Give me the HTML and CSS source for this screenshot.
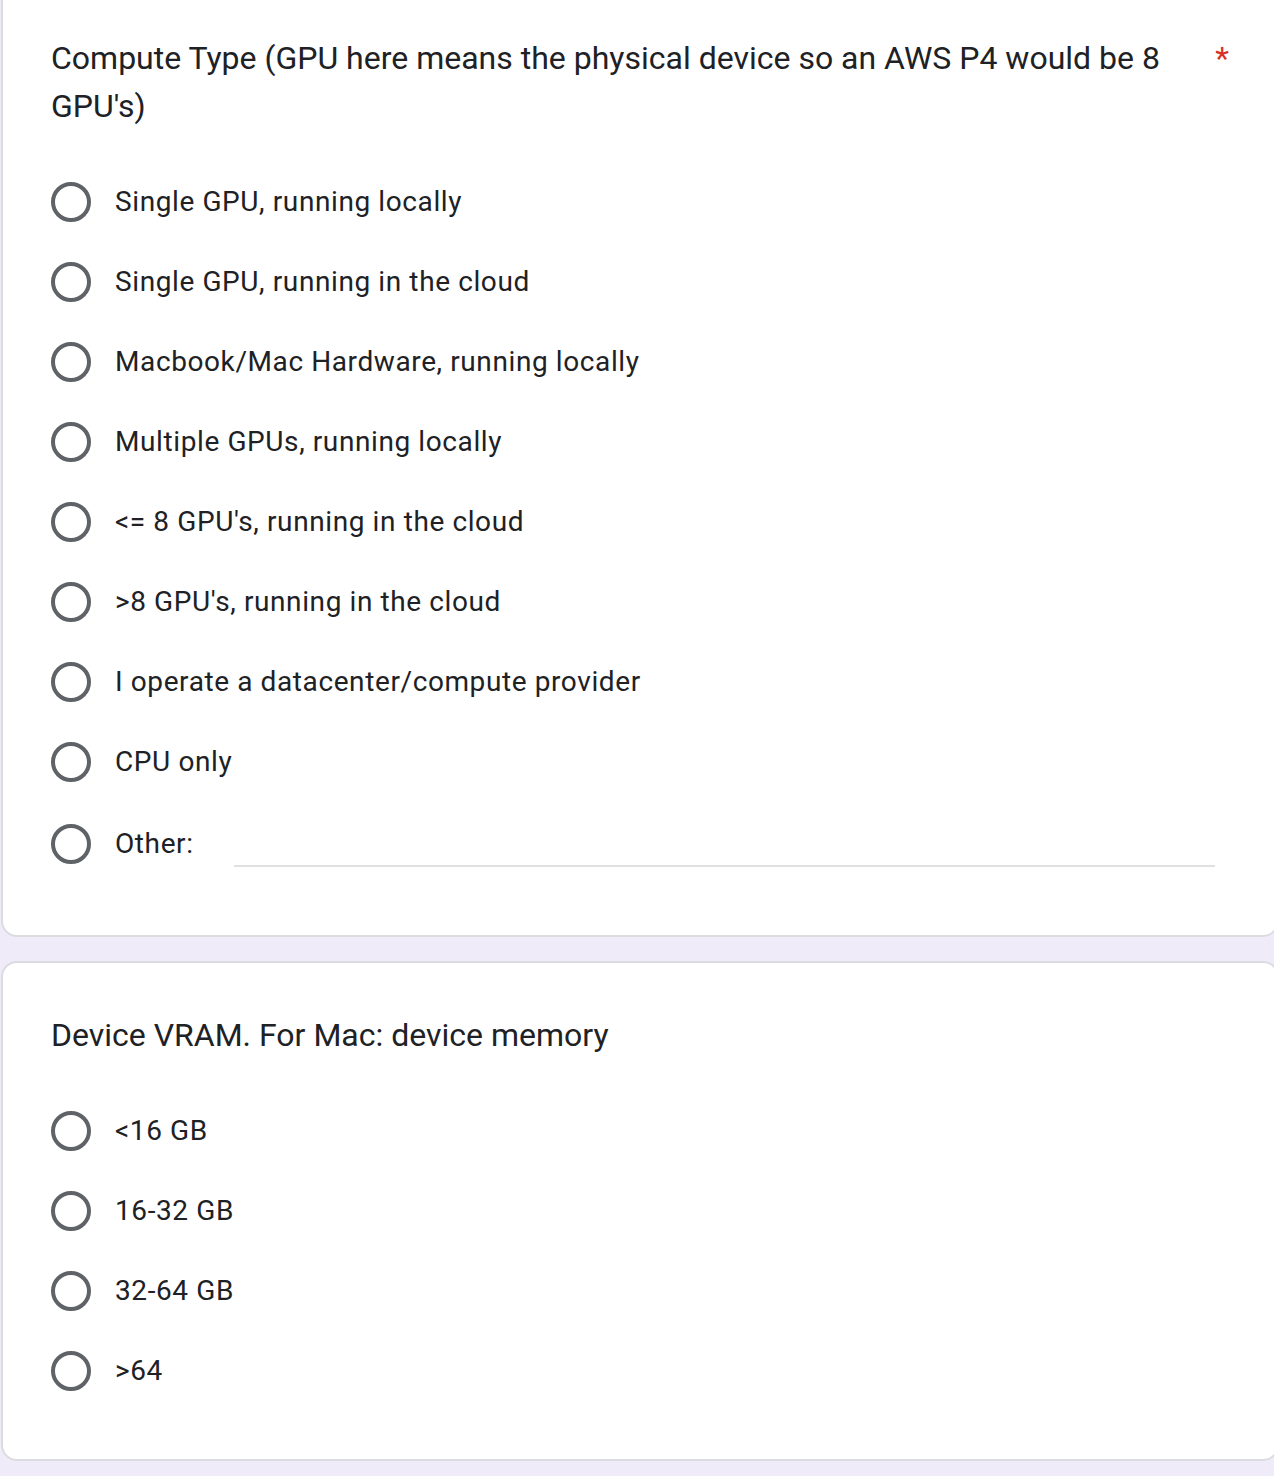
FILE: index.html
```html
<!DOCTYPE html>
<html lang="en">
<head>
<meta charset="utf-8">
<title>Form</title>
<link rel="stylesheet" href="styles.css">
</head>
<body>
<main class="page">
  <section class="card card-first">
    <div class="q-header">
      <div class="q-title">Compute Type (GPU here means the physical device so an AWS P4 would be 8 GPU's)</div>
      <span class="required">*</span>
    </div>
    <div class="options">
      <label class="option"><span class="radio"></span><span class="opt-text">Single GPU, running locally</span></label>
      <label class="option"><span class="radio"></span><span class="opt-text">Single GPU, running in the cloud</span></label>
      <label class="option"><span class="radio"></span><span class="opt-text">Macbook/Mac Hardware, running locally</span></label>
      <label class="option"><span class="radio"></span><span class="opt-text">Multiple GPUs, running locally</span></label>
      <label class="option"><span class="radio"></span><span class="opt-text">&lt;= 8 GPU's, running in the cloud</span></label>
      <label class="option"><span class="radio"></span><span class="opt-text">&gt;8 GPU's, running in the cloud</span></label>
      <label class="option"><span class="radio"></span><span class="opt-text">I operate a datacenter/compute provider</span></label>
      <label class="option"><span class="radio"></span><span class="opt-text">CPU only</span></label>
      <div class="option option-other"><span class="radio"></span><span class="opt-text">Other:</span><span class="other-input"></span></div>
    </div>
  </section>
  <section class="card">
    <div class="q-header">
      <div class="q-title">Device VRAM. For Mac: device memory</div>
    </div>
    <div class="options">
      <label class="option"><span class="radio"></span><span class="opt-text">&lt;16 GB</span></label>
      <label class="option"><span class="radio"></span><span class="opt-text">16-32 GB</span></label>
      <label class="option"><span class="radio"></span><span class="opt-text">32-64 GB</span></label>
      <label class="option"><span class="radio"></span><span class="opt-text">&gt;64</span></label>
    </div>
  </section>
</main>
</body>
</html>
```
FILE: styles.css
```css
html, body {
  margin: 0;
  padding: 0;
}
body {
  background: #f0ebf8;
  font-family: Roboto, "Noto Sans", Arial, sans-serif;
  color: #202124;
  overflow: hidden;
  width: 1274px;
  height: 1476px;
}
.page {
  padding-left: 1px;
  display: flex;
  flex-direction: column;
  gap: 24px;
}
.card {
  box-sizing: border-box;
  width: 1278px;
  background: #fff;
  border: 2px solid #dadce0;
  border-radius: 16px;
  padding: 48px 48px 48px 48px;
}
.card-first {
  margin-top: -16px;
  padding-bottom: 51px;
}
.q-header {
  display: flex;
  align-items: flex-start;
}
.q-title {
  flex: 1;
  font-size: 32px;
  line-height: 48px;
  letter-spacing: 0;
  padding-right: 40px;
}
.required {
  color: #d93025;
  font-size: 32px;
  line-height: 48px;
}
.options {
  margin-top: 32px;
  display: flex;
  flex-direction: column;
}
.option {
  display: flex;
  align-items: center;
  height: 80px;
}
.option-other {
  height: 82px;
  padding-top: 1px;
  box-sizing: border-box;
}
.radio {
  box-sizing: border-box;
  width: 40px;
  height: 40px;
  border: 4px solid #5f6368;
  border-radius: 50%;
  flex: none;
}
.opt-text {
  margin-left: 24px;
  font-size: 28px;
  letter-spacing: 0.6px;
  line-height: 40px;
}
.other-input {
  flex: 1;
  align-self: center;
  height: 40px;
  margin-top: 4px;
  margin-left: 40px;
  margin-right: 14px;
  border-bottom: 2px solid #e0e0e0;
}
```
